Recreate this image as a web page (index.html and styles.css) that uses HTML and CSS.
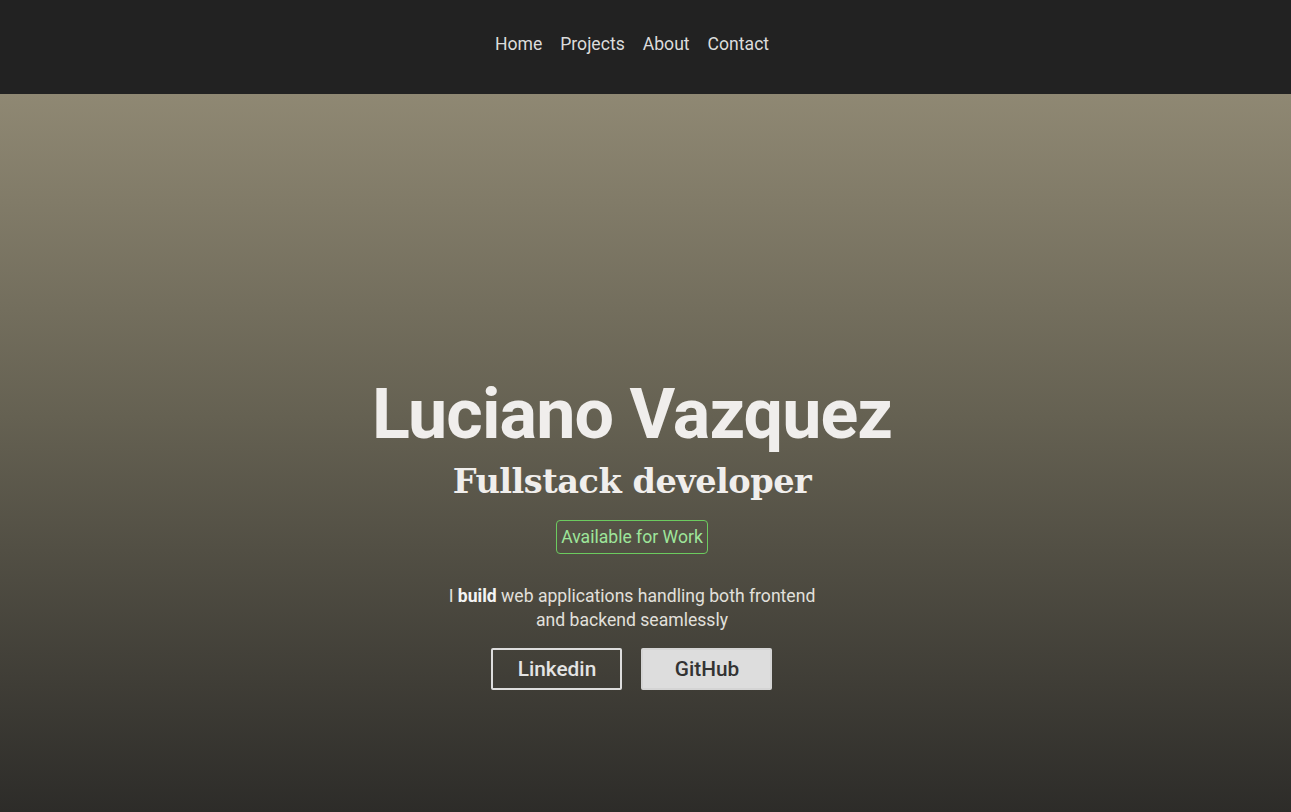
FILE: index.html
```html
<!DOCTYPE html>
<html lang="en">
<head>
<meta charset="utf-8">
<title>Luciano Vazquez</title>
<link rel="stylesheet" href="styles.css">
</head>
<body>
<header class="topbar">
  <nav class="nav">
    <a href="#" class="nav-link">Home</a>
    <a href="#" class="nav-link">Projects</a>
    <a href="#" class="nav-link">About</a>
    <a href="#" class="nav-link">Contact</a>
  </nav>
</header>
<main class="hero">
  <div class="hero-inner">
    <h1 class="name">Luciano Vazquez</h1>
    <h2 class="role">Fullstack developer</h2>
    <span class="badge">Available for Work</span>
    <p class="intro">I <strong>build</strong> web applications handling both frontend and backend seamlessly</p>
    <div class="actions">
      <a href="#" class="btn btn-outline">Linkedin</a>
      <a href="#" class="btn btn-solid">GitHub</a>
    </div>
  </div>
</main>
</body>
</html>
```
FILE: styles.css
```css
* { box-sizing: border-box; }
html, body { margin: 0; padding: 0; }
body {
  font-family: Roboto, "Liberation Sans", sans-serif;
  background: #2d2c2a;
  color: #eee;
}
.topbar {
  height: 94px;
  background: #222222;
  display: flex;
  align-items: center;
  justify-content: center;
  padding: 0 27px 6px 0;
}
.nav {
  display: flex;
  gap: 18px;
}
.nav-link {
  color: #dcdcdc;
  text-decoration: none;
  font-size: 17.6px;
}
.hero {
  height: 718px;
  background: linear-gradient(to bottom, #8f8873 0%, #656152 45%, #2d2c29 100%);
  display: flex;
  justify-content: center;
  padding-right: 27px;
}
.hero-inner {
  display: flex;
  flex-direction: column;
  align-items: center;
  padding-top: 279px;
}
.name {
  margin: 0;
  font-size: 70px;
  font-weight: 700;
  letter-spacing: -0.9px;
  line-height: 82px;
  color: #f0eeec;
}
.role {
  margin: 4px 0 0;
  font-family: "DejaVu Serif", "Liberation Serif", serif;
  font-size: 33.6px;
  font-weight: 700;
  line-height: 44px;
  color: #f0eeec;
  letter-spacing: -0.5px;
}
.badge {
  margin-top: 17px;
  border: 1px solid #6ccb5f;
  border-radius: 4px;
  color: #9ee59a;
  font-size: 17.6px;
  line-height: 32px;
  padding: 0 4px;
}
.intro {
  margin: 30px 0 0;
  width: 372px;
  text-align: center;
  font-size: 17.6px;
  line-height: 24px;
  color: #e2e0dc;
}
.intro strong { color: #f4f4f4; }
.actions {
  margin-top: 16px;
  display: flex;
  gap: 19px;
}
.btn {
  width: 131px;
  height: 42px;
  display: flex;
  align-items: center;
  justify-content: center;
  font-size: 20.8px;
  font-weight: 500;
  text-decoration: none;
  border: 2px solid #dddddd;
  border-radius: 2px;
}
.btn-outline { color: #e4e4e4; background: transparent; }
.btn-solid { color: #333333; background: #dddddd; border-color: #d4d4d4; }
```
